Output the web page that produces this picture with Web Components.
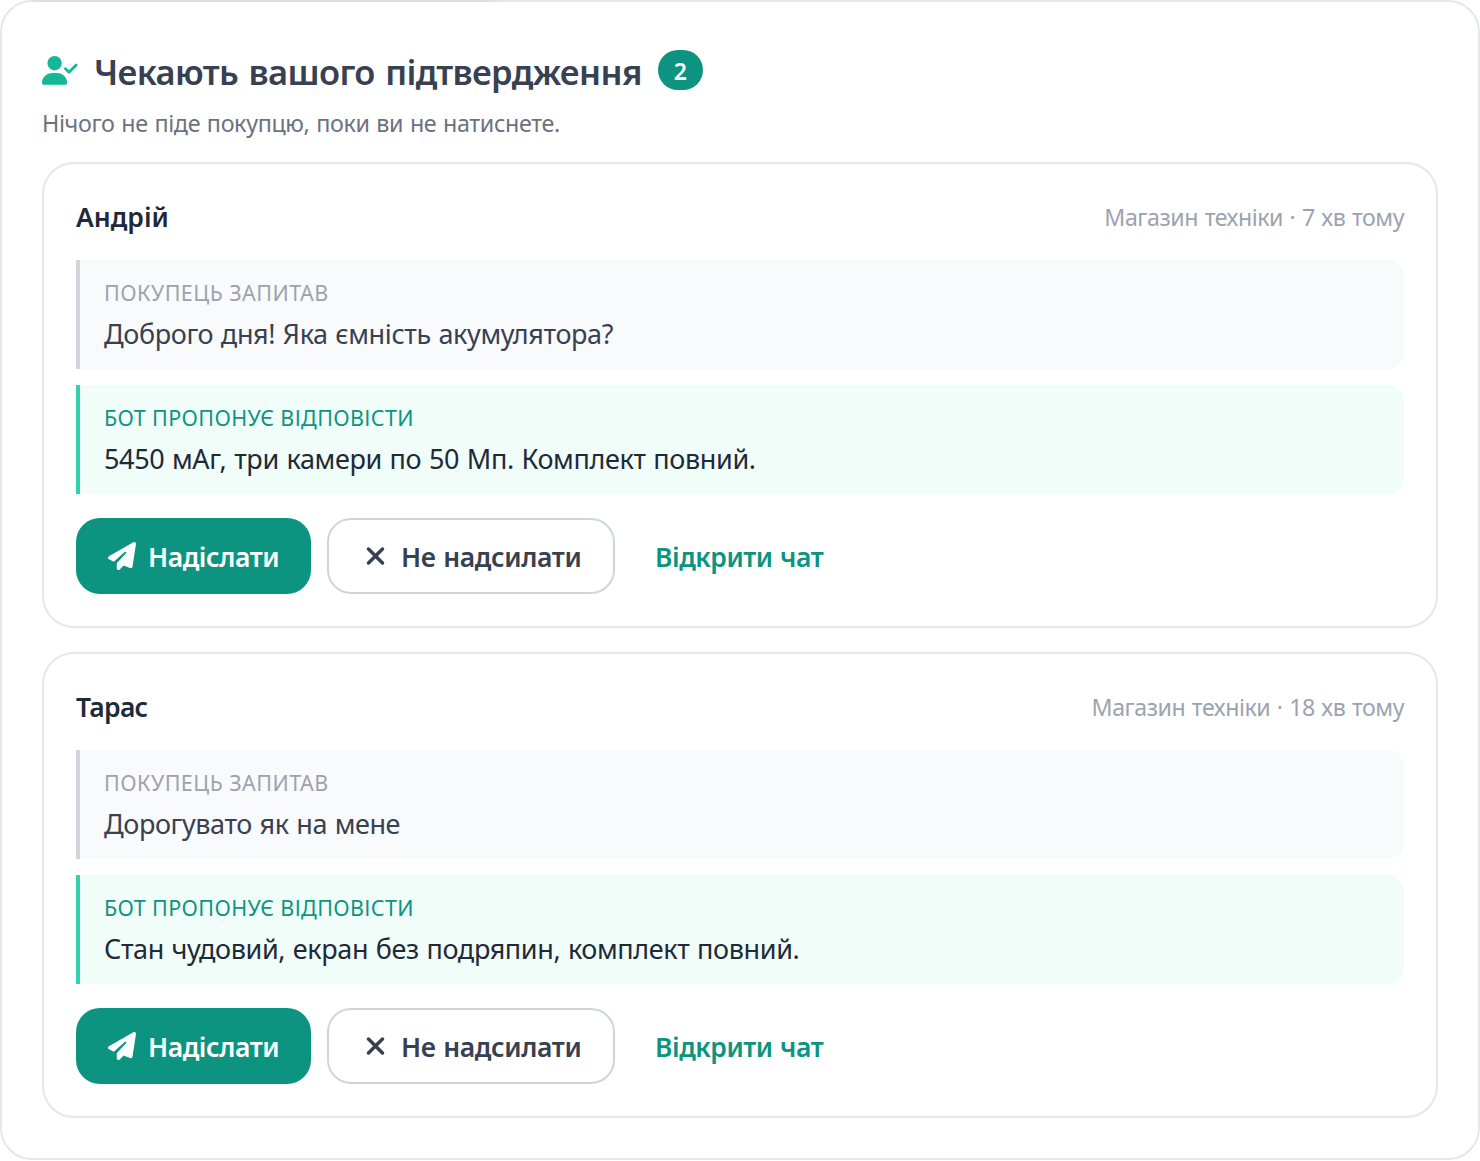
<!DOCTYPE html>
<html lang="uk">
<head>
  <meta charset="utf-8">
  <title>Чекають вашого підтвердження</title>
  <style>
    body {
      margin: 0;
      background: #fff;
      font-family: "Noto Sans", "Open Sans", sans-serif;
      color: #374151;
    }
  </style>
</head>
<body>
  <approval-panel heading="Чекають вашого підтвердження" count="2" hint="Нічого не піде покупцю, поки ви не натиснете.">
    <approval-card name="Андрій" meta="Магазин техніки · 7 хв тому">
      <message-quote label="Покупець запитав" style="--tracking: -0.38px">Доброго дня! Яка ємність акумулятора?</message-quote>
      <message-quote kind="bot" label="Бот пропонує відповісти" style="--tracking: -0.36px">5450 мАг, три камери по 50 Мп. Комплект повний.</message-quote>
    </approval-card>
    <approval-card name="Тарас" meta="Магазин техніки · 18 хв тому" style="--name-tracking: -0.7px">
      <message-quote label="Покупець запитав" style="--tracking: -0.41px">Дорогувато як на мене</message-quote>
      <message-quote kind="bot" label="Бот пропонує відповісти" style="--tracking: -0.38px">Стан чудовий, екран без подряпин, комплект повний.</message-quote>
    </approval-card>
  </approval-panel>

  <script>
    const ICONS = {
      "user-check": {
        width: 640,
        path: "M96 128a128 128 0 1 1 256 0A128 128 0 1 1 96 128zM0 482.3C0 383.8 79.8 304 178.3 304h91.4C368.2 304 448 383.8 448 482.3c0 16.4-13.3 29.7-29.7 29.7H29.7C13.3 512 0 498.7 0 482.3zM625 177L497 305c-9.4 9.4-24.6 9.4-33.9 0l-64-64c-9.4-9.4-9.4-24.6 0-33.9s24.6-9.4 33.9 0l47 47L591 143c9.4-9.4 24.6-9.4 33.9 0s9.4 24.6 0 33.9z",
      },
      "paper-plane": {
        width: 512,
        path: "M498.1 5.6c10.1 7 15.4 19.1 13.5 31.2l-64 416c-1.5 9.7-7.4 18.2-16 23s-18.9 5.4-28 1.6L284 427.7l-68.5 74.1c-8.9 9.7-22.9 12.9-35.2 8.1S160 493.2 160 480V396.4c0-4 1.5-7.8 4.2-10.7L331.8 202.8c5.8-6.3 5.6-16-.4-22s-15.7-6.4-22-.7L106 360.8 17.7 316.6C7.1 311.3 .3 300.7 0 288.9s5.9-22.8 16.1-28.7l448-256c10.7-6.1 23.9-5.5 34 1.4z",
      },
      "xmark": {
        width: 384,
        path: "M342.6 150.6c12.5-12.5 12.5-32.8 0-45.3s-32.8-12.5-45.3 0L192 210.7 86.6 105.4c-12.5-12.5-32.8-12.5-45.3 0s-12.5 32.8 0 45.3L146.7 256 41.4 361.4c-12.5 12.5-12.5 32.8 0 45.3s32.8 12.5 45.3 0L192 301.3 297.4 406.6c12.5 12.5 32.8 12.5 45.3 0s12.5-32.8 0-45.3L237.3 256 342.6 150.6z",
      },
    };

    /** Solid icon, sized by --icon-size (its height). */
    class UiIcon extends HTMLElement {
      constructor() {
        super();
        this.attachShadow({ mode: "open" });
      }

      connectedCallback() {
        const icon = ICONS[this.getAttribute("name")];
        this.shadowRoot.innerHTML = `
          <style>
            :host {
              display: inline-flex;
              justify-content: center;
              flex: none;
            }

            svg {
              display: block;
              height: var(--icon-size, 28px);
              fill: currentColor;
            }
          </style>
          <svg viewBox="0 0 ${icon.width} 512" aria-hidden="true"><path d="${icon.path}"/></svg>
        `;
      }
    }

    /** Button with the variants "primary", "outline" and "link". */
    class UiButton extends HTMLElement {
      constructor() {
        super();
        this.attachShadow({ mode: "open" });
      }

      connectedCallback() {
        const icon = this.getAttribute("icon");
        this.shadowRoot.innerHTML = `
          <style>
            :host {
              display: block;
            }

            button {
              display: flex;
              align-items: center;
              gap: 12px;
              box-sizing: border-box;
              width: 100%;
              height: 76px;
              padding: 0 32px;
              border: 0;
              border-radius: 24px;
              background: #0d9480;
              color: #fff;
              font: 600 26.5px/38px "Noto Sans", "Open Sans", sans-serif;
              letter-spacing: var(--tracking, 0);
              word-spacing: 1px;
              white-space: nowrap;
              cursor: pointer;
            }

            :host([variant="outline"]) button {
              border: 2px solid #d1d5db;
              background: #fff;
              color: #374151;
            }

            :host([variant="link"]) button {
              padding: 0 24px;
              background: none;
              color: #0d9480;
            }

            ui-icon {
              width: 28px;
            }

            .text {
              padding-top: 2px;
            }
          </style>
          <button type="button">
            ${icon ? `<ui-icon name="${icon}"></ui-icon>` : ""}
            <span class="text"><slot></slot></span>
          </button>
        `;
      }
    }

    /** Quoted message with a coloured bar on the left. */
    class MessageQuote extends HTMLElement {
      constructor() {
        super();
        this.attachShadow({ mode: "open" });
      }

      connectedCallback() {
        this.shadowRoot.innerHTML = `
          <style>
            :host {
              display: block;
              padding: 16px 24px;
              border-left: 4px solid #d1d5db;
              border-radius: 0 16px 16px 0;
              background: #f9fafc;
              color: #374151;
            }

            :host([kind="bot"]) {
              border-left-color: #2dd4af;
              background: #f0fdf9;
              color: #1f2937;
            }

            .label {
              color: #9ca3af;
              font-size: 21.5px;
              line-height: 33px;
              letter-spacing: 0.46px;
              text-transform: uppercase;
            }

            :host([kind="bot"]) .label {
              color: #0d9480;
              letter-spacing: 0.36px;
            }

            .text {
              margin-top: 5px;
              font-size: 27px;
              line-height: 39px;
              letter-spacing: var(--tracking, 0);
              word-spacing: 1px;
            }
          </style>
          <div class="label">${this.getAttribute("label")}</div>
          <div class="text"><slot></slot></div>
        `;
      }
    }

    /** One pending reply: who asked, the quotes, and the actions. */
    class ApprovalCard extends HTMLElement {
      constructor() {
        super();
        this.attachShadow({ mode: "open" });
      }

      connectedCallback() {
        this.shadowRoot.innerHTML = `
          <style>
            :host {
              display: block;
              padding: 32px;
              border: 2px solid #e5e7eb;
              border-radius: 32px;
              background: #fff;
            }

            header {
              display: flex;
              justify-content: space-between;
              align-items: center;
              height: 42px;
              margin-bottom: 22px;
            }

            .name {
              color: #1f2937;
              font-size: 26.5px;
              font-weight: 600;
              letter-spacing: var(--name-tracking, 0);
            }

            .meta {
              color: #9ca3af;
              font-size: 23.2px;
              letter-spacing: -0.46px;
              word-spacing: 1px;
            }

            .quotes {
              display: flex;
              flex-direction: column;
              gap: 16px;
            }

            .actions {
              display: flex;
              gap: 16px;
              margin-top: 24px;
            }

            .send { width: 235px; --tracking: -0.42px; }
            .skip { width: 288px; --tracking: -0.35px; }
            .open { --tracking: -0.46px; }
          </style>
          <header>
            <span class="name">${this.getAttribute("name")}</span>
            <span class="meta">${this.getAttribute("meta")}</span>
          </header>
          <div class="quotes"><slot></slot></div>
          <div class="actions">
            <ui-button class="send" icon="paper-plane">Надіслати</ui-button>
            <ui-button class="skip" variant="outline" icon="xmark">Не надсилати</ui-button>
            <ui-button class="open" variant="link">Відкрити чат</ui-button>
          </div>
        `;
      }
    }

    /** Panel around the cards, with a title, a counter and a hint. */
    class ApprovalPanel extends HTMLElement {
      constructor() {
        super();
        this.attachShadow({ mode: "open" });
      }

      connectedCallback() {
        this.shadowRoot.innerHTML = `
          <style>
            :host {
              display: block;
              position: relative;
              box-sizing: border-box;
              height: 1160px;
              padding: 48px 40px 40px;
              border: 2px solid #e5e7eb;
              border-radius: 32px;
              background: #fff;
            }

            /* darker stretch of the top edge */
            :host::before {
              content: "";
              position: absolute;
              top: -2px;
              left: 26px;
              width: 474px;
              height: 2px;
              background: linear-gradient(90deg, transparent, #dcdde1 12px, #dcdde1 458px, transparent);
            }

            .title {
              display: flex;
              align-items: center;
              gap: 16px;
              height: 40px;
            }

            .title ui-icon {
              --icon-size: 28.8px;
              width: 36px;
              padding-top: 1px;
              color: #14b899;
            }

            h1 {
              margin: 0;
              padding-top: 3px;
              font-size: 34.5px;
              font-weight: 600;
              line-height: 46px;
              letter-spacing: -0.62px;
              word-spacing: 2px;
              white-space: nowrap;
            }

            .count {
              width: 45px;
              border-radius: 20px;
              background: #0d9480;
              color: #fff;
              font-size: 23px;
              font-weight: 600;
              line-height: 40px;
              padding-top: 1px;
              height: 39px;
              text-align: center;
            }

            .hint {
              margin: 16px 0 22px;
              color: #6b7280;
              font-size: 23.3px;
              line-height: 34px;
              letter-spacing: -0.35px;
              word-spacing: 1px;
            }

            .cards {
              display: flex;
              flex-direction: column;
              gap: 24px;
            }
          </style>
          <div class="title">
            <ui-icon name="user-check"></ui-icon>
            <h1>${this.getAttribute("heading")}</h1>
            <span class="count">${this.getAttribute("count")}</span>
          </div>
          <p class="hint">${this.getAttribute("hint")}</p>
          <div class="cards"><slot></slot></div>
        `;
      }
    }

    customElements.define("ui-icon", UiIcon);
    customElements.define("ui-button", UiButton);
    customElements.define("message-quote", MessageQuote);
    customElements.define("approval-card", ApprovalCard);
    customElements.define("approval-panel", ApprovalPanel);
  </script>
</body>
</html>
